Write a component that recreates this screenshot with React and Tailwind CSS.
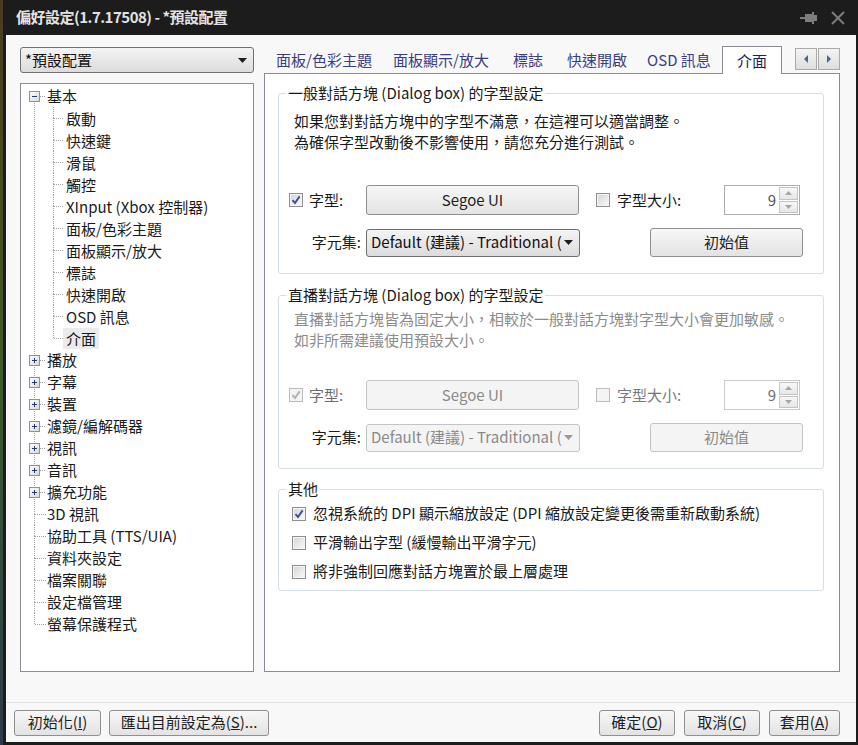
import React from 'react';

// --- DATA ---
const basicChildren = [
  '啟動', '快速鍵', '滑鼠', '觸控', 'XInput (Xbox 控制器)', '面板/色彩主題',
  '面板顯示/放大', '標誌', '快速開啟', 'OSD 訊息', '介面',
];

const topItems = [
  { label: '播放', box: true },
  { label: '字幕', box: true },
  { label: '裝置', box: true },
  { label: '濾鏡/編解碼器', box: true },
  { label: '視訊', box: true },
  { label: '音訊', box: true },
  { label: '擴充功能', box: true },
  { label: '3D 視訊' },
  { label: '協助工具 (TTS/UIA)' },
  { label: '資料夾設定' },
  { label: '檔案關聯' },
  { label: '設定檔管理' },
  { label: '螢幕保護程式' },
];

const tabs = [
  { label: '面板/色彩主題', w: 'w-[116px]' },
  { label: '面板顯示/放大', w: 'w-[118px]' },
  { label: '標誌', w: 'w-[56px]' },
  { label: '快速開啟', w: 'w-[82px]' },
  { label: 'OSD 訊息', w: 'w-[82px]' },
];

// --- SMALL PARTS ---

const DOT = '#a0a0a0';

// connector drawing for one tree level
const Gutter = ({ w, x, top, bottom, box }) => (
  <svg width={w} height="22" className="shrink-0">
    {top && <line x1={x + 0.5} y1="0" x2={x + 0.5} y2={box ? 6 : 11} stroke={DOT} strokeDasharray="1 1" />}
    {bottom && <line x1={x + 0.5} y1={box ? 16 : 11} x2={x + 0.5} y2="22" stroke={DOT} strokeDasharray="1 1" />}
    <line x1={box ? x + 6 : x + 1} y1="11.5" x2={w} y2="11.5" stroke={DOT} strokeDasharray="1 1" />
    {box && (
      <g>
        <defs>
          <linearGradient id="bx" x1="0" y1="0" x2="1" y2="1">
            <stop offset="0" stopColor="#ffffff" />
            <stop offset="1" stopColor="#d6d6d6" />
          </linearGradient>
        </defs>
        <rect x={x - 4.5} y="6.5" width="10" height="10" fill="url(#bx)" stroke="#919191" />
        <line x1={x - 2} y1="11.5" x2={x + 3} y2="11.5" stroke="#1f3a6b" />
        {box === 'plus' && <line x1={x + 0.5} y1="9" x2={x + 0.5} y2="14" stroke="#1f3a6b" />}
      </g>
    )}
  </svg>
);

const Check = ({ checked, disabled }) => (
  <span
    className={`flex h-[14px] w-[14px] shrink-0 items-center justify-center border ${
      disabled
        ? 'border-[#bcbcbc] bg-[#f4f4f4]'
        : 'border-[#8e8f8f] bg-linear-to-br from-[#d4d4d4] to-[#fbfbfb] shadow-[inset_0_0_0_1px_#f4f4f4]'
    }`}
  >
    {checked && (
      <svg width="10" height="10" viewBox="0 0 10 10">
        <path d="M1.5 5.2 L4 8 L8.6 1.4" fill="none" stroke={disabled ? '#b0b0b0' : '#3b4f94'} strokeWidth="1.9" />
      </svg>
    )}
  </span>
);

const Btn = ({ children, className = '', disabled }) => (
  <div
    className={`flex items-center justify-center rounded-[3px] border text-[15px] ${
      disabled
        ? 'border-[#c2c5c8] bg-[#f4f4f4] text-[#8a8a8a]'
        : 'border-[#8f8f8f] bg-linear-to-b from-[#f7f7f7] to-[#e3e3e3] text-[#1e1e1e]'
    } ${className}`}
  >
    {children}
  </div>
);

const Caret = ({ color = '#1e1e1e' }) => (
  <svg width="9" height="5" viewBox="0 0 9 5" className="shrink-0">
    <path d="M0 0 H9 L4.5 5 Z" fill={color} />
  </svg>
);

const Select = ({ text, disabled, className = '' }) => (
  <div
    className={`flex items-center rounded-[3px] border text-[15px] ${
      disabled
        ? 'border-[#c2c5c8] bg-[#f4f4f4] text-[#8a8a8a]'
        : 'border-[#707070] bg-linear-to-b from-[#f4f4f4] to-[#dcdcdc] text-[#111]'
    } ${className}`}
  >
    <span className="min-w-0 flex-1 whitespace-nowrap pl-[4px]">{text}</span>
    <span className="flex w-[22px] justify-center">
      <Caret color={disabled ? '#9a9a9a' : '#1e1e1e'} />
    </span>
  </div>
);

const Spin = ({ disabled }) => (
  <div className={`flex w-[76px] border bg-white ${disabled ? 'border-[#c9cbcf]' : 'border-[#abadb3]'}`}>
    <span className={`flex-1 pr-[3px] text-right text-[15px] leading-[27px] ${disabled ? 'text-[#6d6d6d]' : 'text-[#555]'}`}>9</span>
    <div className="my-[1px] mr-[1px] flex w-[19px] flex-col gap-[1px]">
      {['M0 4 L3.5 0 L7 4 Z', 'M0 0 H7 L3.5 4 Z'].map((d) => (
        <div key={d} className="flex flex-1 items-center justify-center border border-[#c5c5c5] bg-linear-to-b from-[#f8f8f8] to-[#e6e6e6]">
          <svg width="7" height="4" viewBox="0 0 7 4">
            <path d={d} fill="#a6a6a6" />
          </svg>
        </div>
      ))}
    </div>
  </div>
);

// --- TREE ---

const TreeRow = ({ children, gutters }) => (
  <div className="flex h-[22px] items-center pl-[3px]">
    {gutters}
    {children}
  </div>
);

const Tree = () => (
  <div className="mt-[10px] flex-1 border border-[#898c95] bg-white pt-[1px] text-[15px] leading-[22px] text-[#1a1a1a]">
    <TreeRow gutters={<Gutter w={22} x={10} bottom box="minus" />}>
      <span className="ml-[1px]">基本</span>
    </TreeRow>
    {basicChildren.map((c, i) => {
      const last = i === basicChildren.length - 1;
      return (
        <TreeRow
          key={c}
          gutters={
            <>
              <svg width="22" height="22" className="shrink-0">
                <line x1="10.5" y1="0" x2="10.5" y2="22" stroke={DOT} strokeDasharray="1 1" />
              </svg>
              <Gutter w={17} x={7} top bottom={!last} />
            </>
          }
        >
          <span className={`px-[3px] leading-[21px] ${last ? 'bg-[#ebebeb]' : ''}`}>{c}</span>
        </TreeRow>
      );
    })}
    {topItems.map((t, i) => (
      <TreeRow
        key={t.label}
        gutters={<Gutter w={22} x={10} top bottom={i !== topItems.length - 1} box={t.box ? 'plus' : undefined} />}
      >
        <span className="ml-[1px]">{t.label}</span>
      </TreeRow>
    ))}
  </div>
);

// --- TABS ---

const ScrollBtn = ({ d }) => (
  <div className="flex h-[22px] w-[22px] items-center justify-center border border-[#a9a9a9] bg-linear-to-b from-[#f4f4f4] to-[#dedede]">
    <svg width="4" height="8" viewBox="0 0 4 8">
      <path d={d} fill="#4d62a0" />
    </svg>
  </div>
);

const TabStrip = () => (
  <div className="flex h-[26px] items-stretch text-[15px]">
    <div className="ml-[2px] flex">
      {tabs.map((t) => (
        <div key={t.label} className={`${t.w} flex items-center justify-center pt-[1px] text-[#3a3d80]`}>
          {t.label}
        </div>
      ))}
    </div>
    <div className="relative z-10 -mb-px ml-[2px] flex h-[28px] w-[60px] -translate-y-px items-center justify-center border border-b-0 border-[#898c95] bg-white pt-[2px] text-[#1c1f5c]">
      介面
    </div>
    <div className="ml-auto mt-[1px] flex gap-[1px] self-start">
      <ScrollBtn d="M4 0 V8 L0 4 Z" />
      <ScrollBtn d="M0 0 V8 L4 4 Z" />
    </div>
  </div>
);

// --- PANEL CONTENT ---

const Group = ({ title, className = '', children }) => (
  <fieldset className={`rounded-[3px] border border-[#d5dfe5] ${className}`}>
    <legend className="ml-[7px] px-[2px] text-[15px] leading-[20px] text-[#1a1a1a]">{title}</legend>
    {children}
  </fieldset>
);

const FontGroup = ({ title, lines, disabled, descTop, rowTop, className = '' }) => (
  <Group title={title} className={`pb-[16px] ${className}`}>
    <div className={`${descTop} pl-[15px] text-[15px] leading-[21px] ${disabled ? 'text-[#8c8c8c]' : 'text-[#1a1a1a]'}`}>
      {lines.map((l) => (
        <div key={l}>{l}</div>
      ))}
    </div>
    <div className={`${rowTop} flex h-[30px] items-center text-[15px]`}>
      <div className="flex w-[87px] items-center gap-[6px] pl-[10px]">
        <Check checked disabled={disabled} />
        <span className={disabled ? 'text-[#6d6d6d]' : 'text-[#1a1a1a]'}>字型:</span>
      </div>
      <Btn disabled={disabled} className="h-[30px] w-[213px]">Segoe UI</Btn>
      <div className="flex w-[145px] items-center gap-[7px] pl-[17px]">
        <Check disabled={disabled} />
        <span className={disabled ? 'text-[#7a7a7a]' : 'text-[#1a1a1a]'}>字型大小:</span>
      </div>
      <div className="flex h-[30px]">
        <Spin disabled={disabled} />
      </div>
    </div>
    <div className="mt-[13px] flex h-[29px] items-center text-[15px]">
      <div className="w-[87px] pr-[5px] text-right text-[#1a1a1a]">字元集:</div>
      <Select disabled={disabled} text="Default (建議) - Traditional (" className="h-[28px] w-[214px]" />
      <div className="w-[70px]" />
      <Btn disabled={disabled} className="h-[29px] w-[153px]">初始值</Btn>
    </div>
  </Group>
);

const others = [
  { label: '忽視系統的 DPI 顯示縮放設定 (DPI 縮放設定變更後需重新啟動系統)', checked: true },
  { label: '平滑輸出字型 (緩慢輸出平滑字元)' },
  { label: '將非強制回應對話方塊置於最上層處理' },
];

const Panel = () => (
  <div className="flex-1 border border-[#898c95] bg-white pl-[13px] pr-[15px] pt-[9px]">
    <FontGroup
      title="一般對話方塊 (Dialog box) 的字型設定"
      lines={['如果您對對話方塊中的字型不滿意，在這裡可以適當調整。', '為確保字型改動後不影響使用，請您充分進行測試。']}
      descTop="mt-[7px]"
      rowTop="mt-[33px]"
    />
    <FontGroup
      title="直播對話方塊 (Dialog box) 的字型設定"
      lines={['直播對話方塊皆為固定大小，相較於一般對話方塊對字型大小會更加敏感。', '如非所需建議使用預設大小。']}
      disabled
      descTop="mt-[3px]"
      rowTop="mt-[30px]"
      className="mt-[11px]"
    />
    <Group title="其他" className="mt-[10px] pb-[4px]">
      {others.map((o) => (
        <div key={o.label} className="flex h-[29px] items-center gap-[7px] pl-[13px] text-[15px] text-[#1a1a1a]">
          <Check checked={o.checked} />
          <span>{o.label}</span>
        </div>
      ))}
    </Group>
  </div>
);

// --- WINDOW ---

const TitleBar = () => (
  <div className="flex h-[35px] shrink-0 items-center pl-[13px] pr-[13px]">
    <span className="text-[15px] font-semibold tracking-[-0.5px] text-[#e2e2e2]">偏好設定(1.7.17508) - *預設配置</span>
    <div className="ml-auto flex items-center gap-[14px]">
      <svg width="17" height="12" viewBox="0 0 17 12">
        <rect x="0" y="5" width="5" height="2" fill="#7d7d7d" />
        <rect x="5" y="2" width="7" height="8" fill="#7d7d7d" />
        <rect x="12" y="0" width="2" height="12" fill="#7d7d7d" />
        <rect x="14" y="3" width="3" height="6" fill="#7d7d7d" />
      </svg>
      <svg width="14" height="14" viewBox="0 0 14 14">
        <path d="M1 1 L13 13 M13 1 L1 13" stroke="#7d7d7d" strokeWidth="2" />
      </svg>
    </div>
  </div>
);

const Footer = () => (
  <div className="flex h-[40px] shrink-0 items-center border-t border-[#e2e2e2] pl-[8px] pr-[16px] text-[15px]">
    <Btn className="h-[26px] w-[87px]">初始化(<u>I</u>)</Btn>
    <Btn className="ml-[8px] h-[26px] w-[160px]">匯出目前設定為(<u>S</u>)...</Btn>
    <Btn className="ml-auto h-[26px] w-[76px]">確定(<u>O</u>)</Btn>
    <Btn className="ml-[9px] h-[26px] w-[76px]">取消(<u>C</u>)</Btn>
    <Btn className="ml-[9px] h-[26px] w-[71px]">套用(<u>A</u>)</Btn>
  </div>
);

export default function App() {
  return (
    <div className="flex h-[745px] w-[858px] overflow-hidden bg-[#1c1c1c] font-['Noto_Sans_CJK_TC','Noto_Sans',sans-serif]">
      <div className="w-[3px] shrink-0 bg-linear-to-b from-[#4a3a22] via-[#3d5a2a] to-[#2c3a4a]" />
      <div className="flex flex-1 flex-col">
        <TitleBar />
        <div className="mb-[3px] ml-[3px] mr-[2px] flex flex-1 flex-col bg-[#f8f8f8]">
          <div className="flex flex-1 gap-[10px] pb-[30px] pl-[14px] pr-[16px] pt-[12px]">
            <div className="flex w-[234px] flex-col">
              <Select text="*預設配置" className="h-[26px]" />
              <Tree />
            </div>
            <div className="flex flex-1 flex-col">
              <TabStrip />
              <Panel />
            </div>
          </div>
          <Footer />
        </div>
      </div>
    </div>
  );
}
